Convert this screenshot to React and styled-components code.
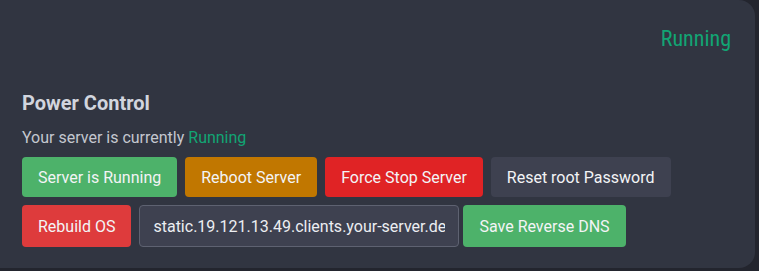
import styled, { createGlobalStyle } from "styled-components";

const GlobalStyle = createGlobalStyle`
  html, body {
    margin: 0;
    padding: 0;
    background: #23252e;
  }
  body {
    font-family: Roboto, "Liberation Sans", sans-serif;
  }
`;

const Card = styled.div`
  width: 755px;
  height: 268px;
  box-sizing: border-box;
  background: #313541;
  border-radius: 0 16px 16px 0;
  padding: 24px 24px 0 22px;
  display: flex;
  flex-direction: column;
`;

const Status = styled.div`
  align-self: flex-end;
  font-family: Roboto, sans-serif;
  font-stretch: 75%;
  font-size: 22px;
  line-height: 30px;
  color: #12a574;
`;

const Heading = styled.h2`
  margin: 35px 0 0;
  font-size: 20px;
  line-height: 28px;
  font-weight: 700;
  color: #d1d5de;
`;

const Text = styled.p`
  margin: 9px 0 0;
  font-size: 16px;
  line-height: 24px;
  color: #c4c7cf;

  span {
    color: #12a574;
  }
`;

const Row = styled.div`
  display: flex;
  gap: 8px;
  margin-top: ${(p) => p.$top}px;
`;

const colors = {
  green: "#4db26a",
  orange: "#c17700",
  red: "#e02325",
  gray: "#3e4150",
  rose: "#de3b3c",
};

const Button = styled.button`
  height: ${(p) => (p.$tall ? 42 : 40)}px;
  padding: 0 16px;
  border: none;
  border-radius: 4px;
  background: ${(p) => colors[p.$tone]};
  color: #f3f4f6;
  font-family: Roboto, sans-serif;
  font-size: 16px;
  cursor: pointer;
`;

const DnsForm = styled.div`
  display: flex;
  gap: 4px;
`;

const Input = styled.input`
  width: 320px;
  height: 42px;
  box-sizing: border-box;
  padding: 0 13px;
  border: 1px solid #5e6271;
  border-radius: 4px;
  background: #3e4150;
  color: #eceef2;
  font-family: Roboto, sans-serif;
  font-size: 16px;
  outline: none;
`;

export default function App() {
  return (
    <>
      <GlobalStyle />
      <Card>
        <Status>Running</Status>
        <Heading>Power Control</Heading>
        <Text>
          Your server is currently <span>Running</span>
        </Text>
        <Row $top={7}>
          <Button $tone="green">Server is Running</Button>
          <Button $tone="orange">Reboot Server</Button>
          <Button $tone="red">Force Stop Server</Button>
          <Button $tone="gray">Reset root Password</Button>
        </Row>
        <Row $top={8}>
          <Button $tone="rose" $tall>Rebuild OS</Button>
          <DnsForm>
            <Input defaultValue="static.19.121.13.49.clients.your-server.de" />
            <Button $tone="green" $tall>Save Reverse DNS</Button>
          </DnsForm>
        </Row>
      </Card>
    </>
  );
}
